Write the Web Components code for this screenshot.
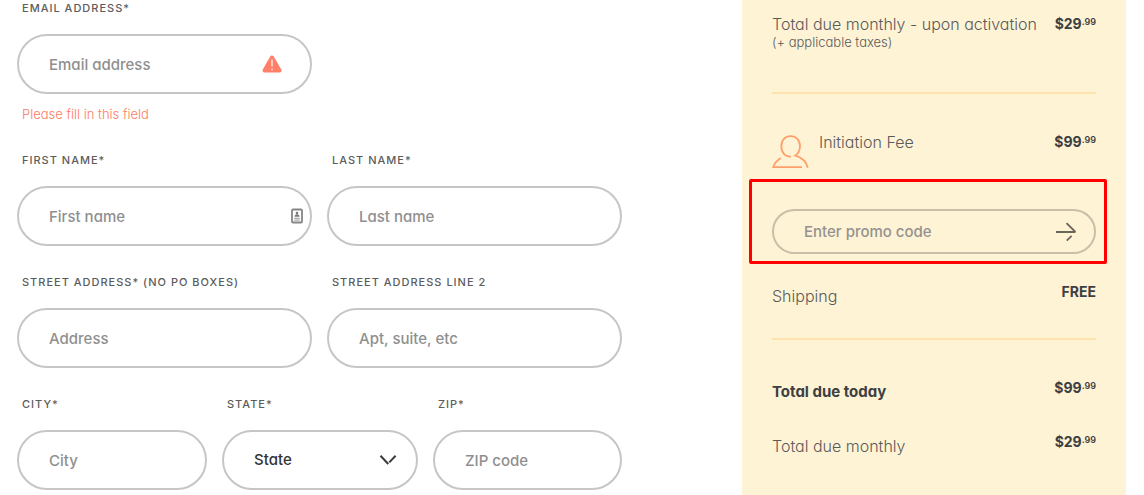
<!DOCTYPE html>
<html lang="en">
<head>
<meta charset="utf-8">
<title>Checkout</title>
<style>
body { margin: 0; background: #fff; font-family: Inter, "Open Sans", sans-serif; font-feature-settings: "cv11"; color: #3d4043; }
</style>
</head>
<body>
<checkout-page></checkout-page>
<script>
const define = (name, html, setup) => customElements.define(name, class extends HTMLElement {
  connectedCallback() {
    if (this.shadowRoot) return;
    const t = document.createElement('template');
    t.innerHTML = html;
    this.attachShadow({ mode: 'open' }).append(t.content.cloneNode(true));
    if (setup) setup(this, this.shadowRoot);
  }
});

const fieldStyle = `
  :host { display: block; min-width: 0; }
  label { display: block; padding-left: 5px; margin-bottom: 18px; font-size: 11px; font-weight: 500; line-height: 16px; letter-spacing: 1px; color: #5c5c5c; text-transform: uppercase; white-space: nowrap; }
  .box { position: relative; }
  input, select { display: block; box-sizing: border-box; width: 100%; height: 60px; margin: 0; padding: 0 30px; border: 2px solid #c6c6c6; border-radius: 30px; background: #fff; font: 500 15px/20px Inter, sans-serif; font-feature-settings: inherit; color: #333; outline: 0; appearance: none; }
  input::placeholder { color: #8f8f8f; opacity: 1; }
  ::slotted([slot=icon]) { position: absolute; top: 0; bottom: 0; margin: auto 0; pointer-events: none; }`;

define('text-field', `<style>${fieldStyle}</style>
  <label for="f"></label><div class="box"><input id="f"><slot name="icon"></slot></div><slot></slot>`,
  (el, root) => {
    root.querySelector('label').textContent = el.getAttribute('label');
    const input = root.querySelector('input');
    input.type = el.getAttribute('type') || 'text';
    input.placeholder = el.getAttribute('placeholder');
  });

define('select-field', `<style>${fieldStyle}
  svg { position: absolute; right: 21px; top: 0; bottom: 0; margin: auto 0; pointer-events: none; }</style>
  <label for="f"></label><div class="box"><select id="f"><option></option></select>
  <svg width="18" height="10" viewBox="0 0 18 10" fill="none" stroke="#3a3a3a" stroke-width="2"><path d="M1.5 .8 9.3 9M10.3 7.4 16.6 .8"/></svg></div>`,
  (el, root) => {
    root.querySelector('label').textContent = el.getAttribute('label');
    root.querySelector('option').textContent = el.getAttribute('placeholder');
  });

define('field-error', `<style>
  :host { display: block; margin: 12px 0 2px; padding-left: 5px; font-size: 13px; font-weight: 300; line-height: 16px; color: #ff7a62; }
  p { margin: 0; }</style><p role="alert"><slot></slot></p>`);

define('warning-icon', `<style>:host { display: block; width: 20px; height: 18px; right: 30px; } svg { display: block; }</style>
  <svg width="20" height="18" viewBox="0 0 20 18"><path d="M10 2.5 17.5 15.5H2.5Z" fill="#ff7f69" stroke="#ff7f69" stroke-width="4" stroke-linejoin="round"/><path d="M10 4.5V11.5M10 13.5V15.2" stroke="#fff" stroke-opacity=".85" stroke-width="1.3"/></svg>`);

define('contact-icon', `<style>:host { display: block; width: 12px; height: 16px; right: 9px; } svg { display: block; }</style>
  <svg width="12" height="16" viewBox="0 0 12 16"><rect x="1" y="1.5" width="10" height="13" rx="1" fill="#fff" stroke="#858585" stroke-width="1.8"/><circle cx="6" cy="5" r="1.3" fill="#777"/><path d="M3.5 8.8Q3.5 6.2 6 6.2T8.5 8.8Z" fill="#777"/><path d="M3.2 10.3H8.8M3.2 12.1H8.8" stroke="#999" stroke-width="1"/></svg>`);

define('address-form', `<style>
  :host { display: block; }
  form { display: grid; gap: 28px; }
  .row { display: grid; grid-template-columns: 1fr 1fr; gap: 15px; }
  .three { grid-template-columns: 190fr 196fr 189fr; }</style>
  <form>
    <div class="row"><text-field label="Email address*" type="email" placeholder="Email address"><warning-icon slot="icon"></warning-icon><field-error>Please fill in this field</field-error></text-field></div>
    <div class="row"><text-field label="First name*" placeholder="First name"><contact-icon slot="icon"></contact-icon></text-field><text-field label="Last name*" placeholder="Last name"></text-field></div>
    <div class="row"><text-field label="Street address* (no PO boxes)" placeholder="Address"></text-field><text-field label="Street address line 2" placeholder="Apt, suite, etc"></text-field></div>
    <div class="row three"><text-field label="City*" placeholder="City"></text-field><select-field label="State*" placeholder="State"></select-field><text-field label="ZIP*" placeholder="ZIP code"></text-field></div>
  </form>`);

define('price-tag', `<style>
  :host { display: block; font-size: 14px; font-weight: 700; line-height: 20px; white-space: nowrap; color: #3d4043; }
  .money { display: flex; align-items: flex-start; }
  small { font-size: 9px; line-height: 16px; font-weight: 600; }</style>
  <span class="money"><span><slot></slot></span><small></small></span>`,
  (el, root) => { root.querySelector('small').textContent = el.getAttribute('cents') || ''; });

define('summary-row', `<style>
  :host { display: flex; align-items: flex-start; justify-content: space-between; font-size: 16px; font-weight: 300; line-height: 20px; color: #5a5a5a; }
  .name { flex: 1; min-width: 0; }
  :host([low]) .name { padding-top: 4px; }
  :host([strong]) .name { font-size: 15px; font-weight: 700; color: #3d4043; }
  ::slotted(small) { display: block; font-size: 13px; line-height: 17px; }</style>
  <slot name="icon"></slot><div class="name"><slot></slot></div><slot name="price"></slot>`);

define('person-icon', `<style>:host { display: block; width: 37px; height: 34px; margin: 3px 10px 0 0; } svg { display: block; }</style>
  <svg width="37" height="34" viewBox="0 0 37 34" fill="none" stroke="#ffa06c" stroke-width="1.8"><path d="M19 21.6C13.5 22 9.3 17.8 9.3 11.2C9.3 5.2 13 1.2 18.5 1.2S28 5.2 28 11C28 15.3 26 18.8 23.4 20.6C29.8 22.5 34.4 27 35.8 32.8M8.8 23C5 25.4 2.2 28.6 1.2 32.2H30"/></svg>`);

define('promo-code', `<style>
  :host { display: block; position: relative; }
  form { display: flex; align-items: center; box-sizing: border-box; height: 45px; margin: 0; padding: 0 17px 0 30px; border: 2px solid #c8bfa8; border-radius: 23px; }
  input { flex: 1; min-width: 0; height: 40px; padding: 0; border: 0; outline: 0; background: none; font: 500 15px/20px Inter, sans-serif; font-feature-settings: inherit; color: #333; }
  input::placeholder { color: #949290; opacity: 1; }
  button { display: block; padding: 0; border: 0; background: none; }
  svg { display: block; }
  .mark { position: absolute; inset: -30px -11px -10px -23px; border: 3px solid #f00; border-radius: 2px; pointer-events: none; }</style>
  <form><input type="text" aria-label="Promo code" placeholder="Enter promo code"><button type="button" aria-label="Apply">
  <svg width="21" height="20" viewBox="0 0 21 20" fill="none" stroke="#6b665b" stroke-width="1.8"><path d="M0 10H19.5M10.5 1.2 19.5 10M15.6 13.8 10.7 18.6"/></svg></button></form>
  <div class="mark"></div>`);

define('order-summary', `<style>
  :host { display: block; box-sizing: border-box; padding: 14px 30px 40px; background: #fff3d5; }
  hr { height: 2px; margin: 0; border: 0; background: #ffe3ae; }
  .first { margin-bottom: 41px; }
  .fee { margin: 38px 0 40px; }
  .ship { margin: 28px 0 32px; }
  .today { margin: 38px 0 30px; }</style>
  <summary-row class="first">Total due monthly - upon activation<small>(+ applicable taxes)</small><price-tag slot="price" cents=".99">$29</price-tag></summary-row>
  <hr>
  <summary-row class="fee"><person-icon slot="icon"></person-icon>Initiation Fee<price-tag slot="price" cents=".99">$99</price-tag></summary-row>
  <promo-code></promo-code>
  <summary-row class="ship" low>Shipping<price-tag slot="price">FREE</price-tag></summary-row>
  <hr>
  <summary-row class="today" low strong>Total due today<price-tag slot="price" cents=".99">$99</price-tag></summary-row>
  <summary-row low>Total due monthly<price-tag slot="price" cents=".99">$29</price-tag></summary-row>`);

define('checkout-page', `<style>
  :host { display: grid; grid-template-columns: minmax(0, 1fr) 384px; column-gap: 120px; padding: 0 18px 0 17px; }</style>
  <address-form></address-form><order-summary></order-summary>`);
</script>
</body>
</html>
